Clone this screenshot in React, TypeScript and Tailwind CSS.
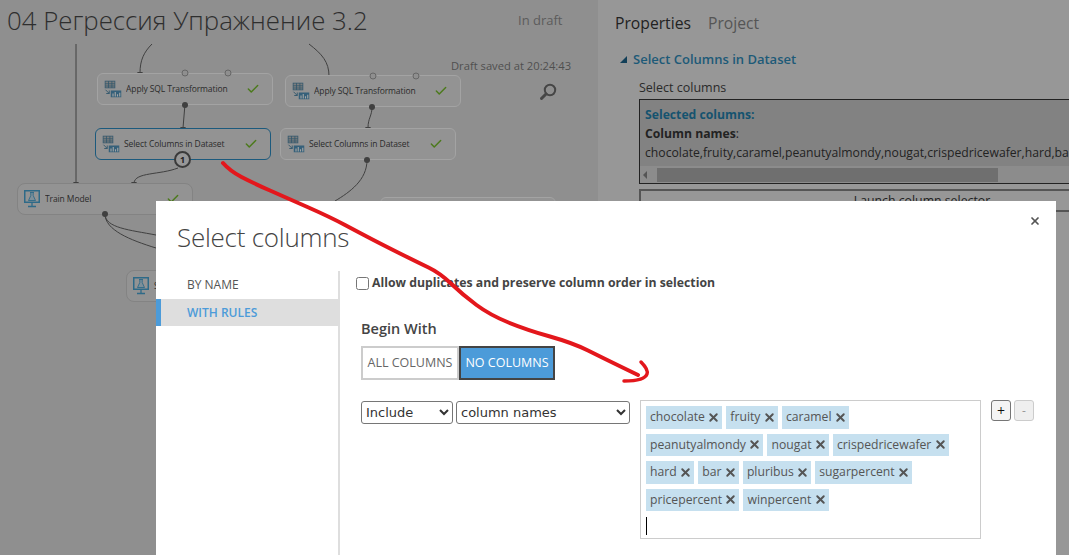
import React from "react";
import { Check, X } from "lucide-react";

const font = "font-['Open_Sans','Noto_Sans',sans-serif]";

const tags = [
  ["chocolate", "fruity", "caramel"],
  ["peanutyalmondy", "nougat", "crispedricewafer"],
  ["hard", "bar", "pluribus", "sugarpercent"],
  ["pricepercent", "winpercent"],
];

// points read off the hand-drawn annotation
const redLine = [
  [223, 163],
  [230, 171],
  [253, 183],
  [287, 198],
  [330, 217],
  [360, 233],
  [383, 245],
  [417, 262],
  [440, 273],
  [463, 295],
  [490, 315],
  [527, 330],
  [573, 343],
  [603, 358],
  [638, 375],
];

const smooth = (pts: number[][]) => {
  let d = `M${pts[0][0]} ${pts[0][1]}`;
  for (let i = 1; i < pts.length - 1; i++) {
    const mx = (pts[i][0] + pts[i + 1][0]) / 2;
    const my = (pts[i][1] + pts[i + 1][1]) / 2;
    d += `Q${pts[i][0]} ${pts[i][1]} ${mx} ${my}`;
  }
  const last = pts[pts.length - 1];
  return `${d}L${last[0]} ${last[1]}`;
};

const TableIcon = () => (
  <svg width="18" height="18" viewBox="0 0 24 24" className="shrink-0">
    <rect x="1.500" y="1.500" width="13" height="9" fill="#7d7d7d" stroke="#2f566c" />
    <path d="M1.500 5h13M1.500 8h13M6 1.500v9M10.500 1.500v9" stroke="#2f566c" fill="none" />
    <path d="M2 13l5 5M7 14v4H3" stroke="#2f566c" strokeWidth="1.200" fill="none" />
    <rect x="9" y="14" width="14" height="9" fill="#35607a" />
    <path d="M12 22v-4M15 22v-6M18 22v-3M21 22v-5" stroke="#a5a5a5" strokeWidth="1.500" />
  </svg>
);

const FlaskIcon = () => (
  <svg width="16" height="18" viewBox="0 0 16 18" className="mr-px shrink-0">
    <rect x="0.750" y="0.750" width="14.500" height="11.500" fill="none" stroke="#2e6a88" strokeWidth="1.500" />
    <path d="M6 2.500h4M6.800 2.500v3L4.500 10.500h7L9.200 5.500v-3" fill="#7d8f99" stroke="#2e6a88" strokeWidth="0.900" />
    <path d="M8 12.500v3.500M4 16.500h8" stroke="#2e6a88" strokeWidth="1.300" />
  </svg>
);

const CanvasNode = ({
  label,
  className,
  icon = "table",
  selected = false,
  done = true,
}: {
  label: string;
  className: string;
  icon?: "table" | "flask";
  selected?: boolean;
  done?: boolean;
}) => (
  <div
    className={`absolute flex h-[32px] w-[176px] items-center border bg-[#939393] pl-[6px] pr-[12px] ${
      selected ? "border-[#1c5a7d]" : icon === "flask" ? "border-[#838383]" : "border-[#a3a3a3]"
    } ${icon === "flask" ? "rounded-[8px]" : "rounded-[6px]"} ${className}`}
  >
    {icon === "table" ? <TableIcon /> : <FlaskIcon />}
    <span className="ml-[4px] flex-1 truncate text-[8.500px] tracking-[-0.1px] text-[#2b2b2b]">{label}</span>
    {done && <Check size={14} strokeWidth={2.5} className="text-[#4c7a1c]" />}
  </div>
);

const Tag = ({ label }: { label: string }) => (
  <span className="flex h-[22.5px] items-center gap-[4px] bg-[#c6e0ef] pl-[4px] pr-[3.500px] text-[12.200px] text-[#555]">
    {label}
    <X size={13} strokeWidth={3.6} className="-mx-[1.500px] text-[#555]" />
  </span>
);

export default function App() {
  return (
    <div className={`relative flex h-[555px] w-[1069px] overflow-hidden bg-[#8f8f8f] ${font}`}>
      {/* experiment canvas, dimmed behind the dialog */}
      <div className="relative w-[598px] shrink-0 bg-[#8f8f8f]">
        <h1 className="pl-[7px] text-[25.800px] font-light leading-[40px] text-[#2e2e2e]">
          04 Регрессия Упражнение 3.2
        </h1>
        <span className="absolute left-[518px] top-[11px] text-[13px] text-[#5c5c5c]">In draft</span>
        <span className="absolute left-[451px] top-[58px] text-[11.200px] text-[#4f4f4f]">Draft saved at 20:24:43</span>
        <svg width="20" height="20" viewBox="0 0 20 20" className="absolute left-[538px] top-[82px]">
          <circle cx="12" cy="8" r="5.200" fill="none" stroke="#464646" strokeWidth="2" />
          <path d="M8 12L3.500 16.500" stroke="#464646" strokeWidth="3" strokeLinecap="round" />
        </svg>

        <svg width="598" height="555" className="absolute left-0 top-0">
          <g fill="none" stroke="#404040" strokeWidth="1">
            <path d="M76 44V183" />
            <path d="M152 44C144 52 140 60 140 73" />
            <path d="M309 44C322 54 329 62 329 76" />
            <path d="M185 104L183 128" />
            <path d="M372 107C372 116 368 118 368 128" />
            <path d="M178 168C160 175 135 172 134 183" />
            <path d="M367 160C367 180 350 192 335 201" />
            <path d="M105 214C105 228 130 230 156 235" />
            <path d="M105 214C105 230 130 240 156 248" />
          </g>
          <g fill="#404040">
            <path d="M73 182h6l-3 4z" />
            <path d="M137 72h6l-3 4z" />
            <path d="M326 75h6l-3 4z" />
            <path d="M180 127h6l-3 4z" />
            <path d="M365 127h6l-3 4z" />
            <path d="M131 182h6l-3 4z" />
          </g>
        </svg>

        <CanvasNode label="Apply SQL Transformation" className="left-[97px] top-[73px]" />
        <CanvasNode label="Apply SQL Transformation" className="left-[285px] top-[75px]" />
        <CanvasNode label="Select Columns in Dataset" className="left-[95px] top-[128px]" selected />
        <CanvasNode label="Select Columns in Dataset" className="left-[280px] top-[128px]" />
        <CanvasNode label="Train Model" icon="flask" className="left-[17px] top-[183px]" />
        <CanvasNode label="S" icon="flask" done={false} className="left-[126px] top-[270px]" />
        <CanvasNode label="" done={false} className="left-[380px] top-[197px]" />

        <svg width="598" height="555" className="pointer-events-none absolute left-0 top-0">
          <g fill="#8f8f8f" stroke="#666">
            <circle cx="185" cy="73" r="3" />
            <circle cx="228" cy="73" r="3" />
            <circle cx="373" cy="76" r="3" />
            <circle cx="416" cy="76" r="3" />
          </g>
          <g fill="#404040">
            <circle cx="185" cy="105" r="3" />
            <circle cx="372" cy="107" r="3" />
            <circle cx="367" cy="160" r="3" />
            <circle cx="105" cy="214" r="3" />
          </g>
        </svg>
        <span className="absolute left-[174px] top-[151px] flex h-[17px] w-[17px] items-center justify-center rounded-full border-2 border-[#3a3a3a] bg-[#979797] text-[9px] font-bold text-[#222]">
          1
        </span>
      </div>

      {/* properties panel */}
      <div className="min-w-0 flex-1 bg-[#979797] pl-[17px]">
        <div className="flex gap-[17px] pt-[11px] text-[15.700px] leading-[24px]">
          <span className="text-[#222]">Properties</span>
          <span className="text-[#555]">Project</span>
        </div>
        <div className="mt-[14px] flex items-center gap-[6px] pl-[5px] text-[13px] font-semibold leading-[20px] text-[#1d5a78]">
          <span className="h-0 w-0 border-b-[7px] border-l-[7px] border-b-[#123f58] border-l-transparent" />
          Select Columns in Dataset
        </div>
        <div className="ml-[24px] mt-[9px] text-[12.500px] leading-[20px] text-[#2a2a2a]">Select columns</div>
        <div className="ml-[24px] mt-[1px] w-[566px] border border-[#222] bg-[#828282] text-[12.200px]">
          <div className="px-[5px] pb-[4px] pt-[5px] leading-[19px] text-[#222]">
            <div className="font-bold text-[#15536f]">Selected columns:</div>
            <div>
              <b>Column names</b>:
            </div>
            <div className="whitespace-nowrap">chocolate,fruity,caramel,peanutyalmondy,nougat,crispedricewafer,hard,bar</div>
          </div>
          <div className="flex h-[17px] items-center bg-[#8c8c8c] pl-[3px]">
            <span className="h-0 w-0 border-y-[4px] border-r-[4px] border-y-transparent border-r-[#555]" />
            <div className="ml-[10px] h-[14px] w-[341px] bg-[#6f6f6f]" />
          </div>
        </div>
        <div className="ml-[24px] mt-[5px] h-[23px] w-[566px] border-2 border-[#555] text-center text-[12.300px] leading-[19px] text-[#222]">
          Launch column selector
        </div>
      </div>

      {/* dialog */}
      <div className="absolute left-[156px] top-[201px] flex h-[354px] w-[900px] flex-col bg-white">
        <div className="flex h-[70px] shrink-0 items-start justify-between pl-[21px] pr-[15px]">
          <h2 className="pt-[17px] text-[26px] font-light leading-[38px] tracking-[-0.25px] text-[#444]">Select columns</h2>
          <X size={12} strokeWidth={3.5} className="mt-[14px] text-[#555]" />
        </div>
        <div className="flex min-h-0 flex-1">
          <aside className="w-[184px] shrink-0 border-r-2 border-[#dedede] text-[12px]">
            <div className="h-[28px] pl-[31px] leading-[28px] text-[#555]">BY NAME</div>
            <div className="h-[27px] border-l-[5px] border-[#4c9bd9] bg-[#dedede] pl-[26px] font-semibold leading-[27px] text-[#4c9bd9]">
              WITH RULES
            </div>
          </aside>
          <div className="min-w-0 flex-1 pl-[16px]">
            <label className="flex items-center gap-[3px] pt-[3px] text-[12.250px] font-bold leading-[18px] text-[#444]">
              <input type="checkbox" className="m-0 h-[13px] w-[13px]" />
              Allow duplicates and preserve column order in selection
            </label>
            <div className="ml-[5px] mt-[27px] text-[14.500px] font-semibold leading-[20px] text-[#444]">Begin With</div>
            <div className="ml-[5px] mt-[7px] flex h-[34px] w-[194px] text-[12.500px]">
              <span className="flex w-[98px] items-center justify-center border-2 border-[#ccc] text-[#666]">ALL COLUMNS</span>
              <span className="flex w-[96px] items-center justify-center border-2 border-[#444] bg-[#4c9bd9] text-white">NO COLUMNS</span>
            </div>
            <div className="ml-[5px] mt-[20px] flex items-start">
              <select defaultValue="Include" className="mt-px h-[23px] w-[92px] rounded-[3px] border border-[#767676] bg-white font-['DejaVu_Sans',sans-serif] text-[13px] text-[#333]">
                <option>Include</option>
              </select>
              <select defaultValue="column names" className="ml-[3px] mt-px h-[23px] w-[174px] rounded-[3px] border border-[#767676] bg-white font-['DejaVu_Sans',sans-serif] text-[13px] text-[#333]">
                <option>column names</option>
              </select>
              <div className="ml-[10px] h-[139px] w-[341px] border border-[#ccc] p-[5px]">
                <div className="flex flex-col gap-[5px]">
                  {tags.map((row) => (
                    <div key={row[0]} className="flex gap-[4px]">
                      {row.map((t) => (
                        <Tag key={t} label={t} />
                      ))}
                    </div>
                  ))}
                </div>
                <div className="mt-[6px] h-[18px] w-px bg-black" />
              </div>
              <button className="ml-[10px] flex h-[21px] w-[20px] items-center justify-center rounded-[3px] border border-[#767676] bg-[#f4f4f4] text-[14px] leading-none text-[#111]">
                +
              </button>
              <button className="ml-[3px] flex h-[21px] w-[20px] items-center justify-center rounded-[3px] border border-[#ccc] bg-[#efefef] text-[12px] leading-none text-[#999]">
                -
              </button>
            </div>
          </div>
        </div>
      </div>

      {/* hand-drawn red annotation */}
      <svg width="1069" height="555" className="pointer-events-none absolute left-0 top-0">
        <g fill="none" stroke="#e3171c" strokeLinecap="round" strokeLinejoin="round">
          <path d={smooth(redLine)} strokeWidth="4" />
          <path d="M641 362C645 366 648 371 647 374C645 380 635 381 624 381" strokeWidth="3.500" />
        </g>
      </svg>
    </div>
  );
}
